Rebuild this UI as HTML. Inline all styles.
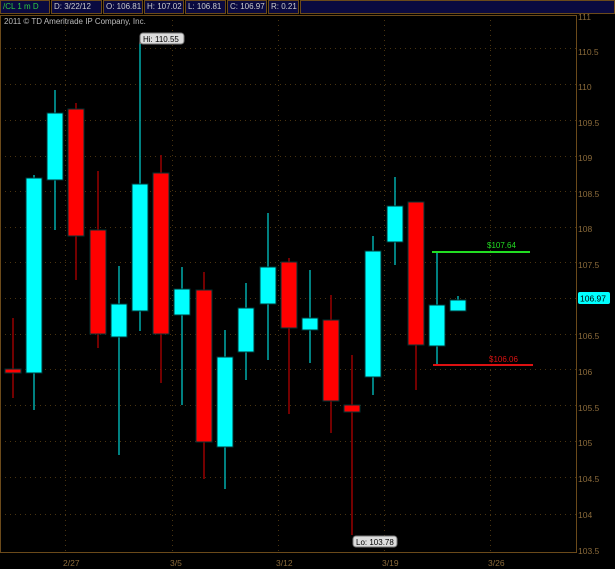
<!DOCTYPE html><html><head><style>
body{margin:0;background:#000;width:615px;height:569px;overflow:hidden;font-family:"Liberation Sans","DejaVu Sans",sans-serif}
.hdr{position:absolute;top:0;left:0;width:615px;height:14px;background:#000}
.hdr div{position:absolute;top:0;height:14px;box-sizing:border-box;background:#0a0a40;border:1px solid #6b4a1a;color:#ccc;font-size:8px;line-height:12px;padding:0 2px;white-space:nowrap;overflow:hidden}
</style></head><body>
<div class="hdr"><div style="color:#2ecc40;left:0;width:50px">/CL 1 m D</div><div style="left:51px;width:51px">D: 3/22/12</div><div style="left:103px;width:40px">O: 106.81</div><div style="left:144px;width:40px">H: 107.02</div><div style="left:185px;width:41px">L: 106.81</div><div style="left:227px;width:40px">C: 106.97</div><div style="left:268px;width:31px">R: 0.21</div><div style="left:300px;width:315px"></div></div>
<svg width="615" height="555" style="position:absolute;top:14px;left:0" viewBox="0 14 615 555" font-family="Liberation Sans, sans-serif">
<g stroke="#4a3410" stroke-dasharray="1,4" stroke-width="1">
<line x1="0" x2="576" y1="48.5" y2="48.5"/><line x1="0" x2="576" y1="84.5" y2="84.5"/><line x1="0" x2="576" y1="120.5" y2="120.5"/><line x1="0" x2="576" y1="156.5" y2="156.5"/><line x1="0" x2="576" y1="191.5" y2="191.5"/><line x1="0" x2="576" y1="227.5" y2="227.5"/><line x1="0" x2="576" y1="262.5" y2="262.5"/><line x1="0" x2="576" y1="298.5" y2="298.5"/><line x1="0" x2="576" y1="334.5" y2="334.5"/><line x1="0" x2="576" y1="369.5" y2="369.5"/><line x1="0" x2="576" y1="405.5" y2="405.5"/><line x1="0" x2="576" y1="441.5" y2="441.5"/><line x1="0" x2="576" y1="477.5" y2="477.5"/><line x1="0" x2="576" y1="514.5" y2="514.5"/>
<line x1="65.5" x2="65.5" y1="15" y2="552"/><line x1="172.5" x2="172.5" y1="15" y2="552"/><line x1="278.5" x2="278.5" y1="15" y2="552"/><line x1="384.5" x2="384.5" y1="15" y2="552"/><line x1="490.5" x2="490.5" y1="15" y2="552"/>
</g>
<g stroke="#6b4a1a" fill="none"><rect x="0.5" y="15.5" width="576" height="537"/></g>
<text x="4" y="24" fill="#bbb" font-size="8">2011 © TD Ameritrade IP Company, Inc.</text>
<g id="c" stroke-width="1.5"></g>
<line x1="432" x2="530" y1="252" y2="252" stroke="#22dd22" stroke-width="2"/>
<text x="487" y="248" fill="#22dd22" font-size="8">$107.64</text>
<line x1="433" x2="533" y1="365" y2="365" stroke="#dd1111" stroke-width="2"/>
<text x="489" y="362" fill="#dd1111" font-size="8">$106.06</text>
<line x1="140" x2="140" y1="44" y2="40" stroke="#aaa"/>
<rect x="140" y="33" width="44" height="11" rx="3" fill="#ddd" stroke="#777"/><text x="143" y="42" font-size="8" fill="#000">Hi: 110.55</text>
<rect x="353" y="536" width="44" height="11" rx="3" fill="#ddd" stroke="#777"/><text x="356" y="545" font-size="8" fill="#000">Lo: 103.78</text>
<g fill="#8a6a3a" font-size="8.5">
<text x="578" y="20">111</text><text x="578" y="55">110.5</text><text x="578" y="90">110</text><text x="578" y="126">109.5</text><text x="578" y="161">109</text><text x="578" y="197">108.5</text><text x="578" y="232">108</text><text x="578" y="268">107.5</text><text x="578" y="339">106.5</text><text x="578" y="375">106</text><text x="578" y="411">105.5</text><text x="578" y="446">105</text><text x="578" y="482">104.5</text><text x="578" y="518">104</text><text x="578" y="554">103.5</text>
<text x="63" y="566">2/27</text><text x="170" y="566">3/5</text><text x="276" y="566">3/12</text><text x="382" y="566">3/19</text><text x="488" y="566">3/26</text>
</g>
<rect x="578" y="292" width="32" height="12" rx="2" fill="#0ff"/><text x="580" y="301.5" font-size="8.5" fill="#000">106.97</text>
</svg>
<script>
var d=[[13,0,369,373,318,398],[34,1,178,373,175,410],[55,1,113,180,90,230],[76,0,109,236,103,280],[98,0,230,334,171,348],[119,1,304,337,266,455],[140,1,184,311,44,331],[161,0,173,334,155,383],[182,1,289,315,267,405],[204,0,290,442,272,479],[225,1,357,447,330,489],[246,1,308,352,283,380],[268,1,267,304,213,360],[289,0,262,328,258,414],[310,1,318,330,270,363],[331,0,320,401,295,433],[352,0,405,412,355,535],[373,1,251,377,236,395],[395,1,206,242,177,265],[416,0,202,345,202,390],[437,1,305,346,253,365],[458,1,300,311,296,311]];
var s='';d.forEach(function(c){var w=c[1]?'#0aa':'#900',f=c[1]?'#0ff':'#f00';
s+='<line x1="'+c[0]+'" x2="'+c[0]+'" y1="'+c[4]+'" y2="'+c[5]+'" stroke="'+w+'"/>';
s+='<rect x="'+(c[0]-8)+'" y="'+c[2]+'" width="16" height="'+(c[3]-c[2])+'" fill="'+f+'" stroke="#033" stroke-width="1"/>';});
document.getElementById('c').innerHTML=s;
</script>
</body></html>
